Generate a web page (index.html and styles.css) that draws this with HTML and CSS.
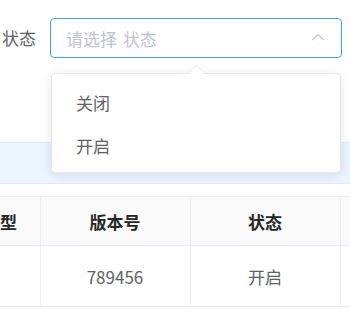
FILE: index.html
```html
<!DOCTYPE html>
<html lang="zh-CN">
  <head>
    <meta charset="UTF-8" />
    <meta name="viewport" content="width=device-width, initial-scale=1.0" />
    <title>状态筛选</title>
    <link rel="stylesheet" href="styles.css">
  </head>
  <body>
    <div class="filter_form">
      <div class="filter_item">
        <label class="filter_label">状态</label>
        <div class="filter_select is-focus">
          <span class="filter_select-placeholder">请选择 状态</span>
          <svg class="filter_select-arrow" width="14" height="8" viewBox="0 0 14 8">
            <polyline points="1,7 7,1.5 13,7" fill="none" stroke="#c0c4cc" stroke-width="1.2" />
          </svg>
        </div>
      </div>
      <div class="filter_dropdown">
        <span class="filter_dropdown-arrow"></span>
        <ul class="filter_dropdown-list">
          <li class="filter_dropdown-item">关闭</li>
          <li class="filter_dropdown-item">开启</li>
        </ul>
      </div>
    </div>

    <div class="toolbar_band"></div>

    <div class="table_wrapper">
      <table class="data_table">
        <colgroup>
          <col class="data_table-col-first" />
          <col class="data_table-col" />
          <col class="data_table-col" />
          <col class="data_table-col" />
        </colgroup>
        <thead>
          <tr>
            <th class="data_table-first">型</th>
            <th>版本号</th>
            <th>状态</th>
            <th></th>
          </tr>
        </thead>
        <tbody>
          <tr>
            <td class="data_table-first"></td>
            <td>789456</td>
            <td>开启</td>
            <td></td>
          </tr>
        </tbody>
      </table>
    </div>
  </body>
</html>
```

FILE: styles.css
```css
body {
  margin: 0;
  font-family: "Noto Sans CJK SC", "Noto Sans", sans-serif;
  font-size: 17px;
  color: #606266;
  background-color: #fff;
  overflow: hidden;
}

ul {
  margin: 0;
  padding: 0;
  list-style: none;
}

.filter_form {
  position: relative;
  padding-top: 18px;
}

.filter_item {
  display: flex;
  align-items: center;
}

.filter_label {
  width: 50px;
  padding-right: 14px;
  box-sizing: border-box;
  text-align: right;
  line-height: 40px;
  color: #606266;
}

.filter_select {
  width: 292px;
  height: 40px;
  box-sizing: border-box;
  border: 1px solid #dcdfe6;
  border-radius: 4px;
  padding: 0 16px 0 15px;
  display: flex;
  align-items: center;
  justify-content: space-between;
}

.filter_select.is-focus {
  border-color: #409eff;
}

.filter_select-placeholder {
  color: #c0c4cc;
  word-spacing: 2px;
}

.filter_select-arrow {
  display: block;
  margin-top: -2px;
}

/* dropdown popper, lies over the page */
.filter_dropdown {
  position: absolute;
  top: 73px;
  left: 51px;
  width: 290px;
  height: 100px;
  box-sizing: border-box;
  background-color: #fff;
  border: 1px solid #e4e7ed;
  border-radius: 4px;
  box-shadow: 0 2px 12px rgba(0, 0, 0, 0.1);
  z-index: 10;
}

.filter_dropdown-arrow {
  position: absolute;
  top: -7px;
  left: 139px;
  width: 10px;
  height: 10px;
  background-color: #fff;
  border-top: 1px solid #ebeef5;
  border-left: 1px solid #ebeef5;
  transform: rotate(45deg);
}

.filter_dropdown-list {
  padding-top: 7px;
}

.filter_dropdown-item {
  height: 43px;
  line-height: 43px;
  padding-left: 24px;
  color: #606266;
}

.toolbar_band {
  margin-top: 84px;
  height: 40px;
  background-color: #ecf5ff;
  border-top: 1px solid #d9ecff;
  border-bottom: 1px solid #d9ecff;
}

.table_wrapper {
  margin-top: 12px;
  overflow: hidden;
}

.data_table {
  width: 490px;
  border-collapse: collapse;
  table-layout: fixed;
}

.data_table-col-first {
  width: 40px;
}

.data_table-col {
  width: 150px;
}

.data_table th,
.data_table td {
  padding: 0;
  border: 1px solid #ebeef5;
  text-align: center;
}

.data_table th {
  height: 48px;
  background-color: #fafafa;
  color: #262626;
  font-weight: bold;
}

.data_table td {
  height: 60px;
  color: #606266;
}

.data_table .data_table-first {
  border-left: none;
  text-align: left;
  white-space: nowrap;
}
```
